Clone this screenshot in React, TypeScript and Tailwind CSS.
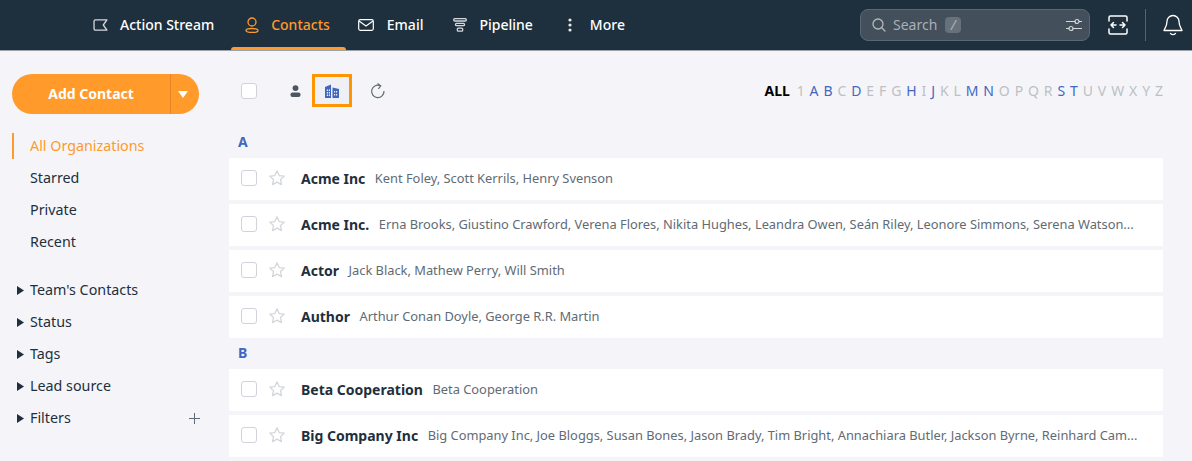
import type { ReactNode } from 'react';

const letters: [string, boolean][] = [
  ['1', false], ['A', true], ['B', true], ['C', false], ['D', true], ['E', false], ['F', false], ['G', false],
  ['H', true], ['I', false], ['J', true], ['K', false], ['L', false], ['M', true], ['N', true], ['O', false],
  ['P', false], ['Q', false], ['R', false], ['S', true], ['T', true], ['U', false], ['V', false], ['W', false],
  ['X', false], ['Y', false], ['Z', false],
];

const groups = [
  {
    letter: 'A',
    rows: [
      ['Acme Inc', 'Kent Foley, Scott Kerrils, Henry Svenson'],
      ['Acme Inc.', 'Erna Brooks, Giustino Crawford, Verena Flores, Nikita Hughes, Leandra Owen, Seán Riley, Leonore Simmons, Serena Watson...'],
      ['Actor', 'Jack Black, Mathew Perry, Will Smith'],
      ['Author', 'Arthur Conan Doyle, George R.R. Martin'],
    ],
  },
  {
    letter: 'B',
    rows: [
      ['Beta Cooperation', 'Beta Cooperation'],
      ['Big Company Inc', 'Big Company Inc, Joe Bloggs, Susan Bones, Jason Brady, Tim Bright, Annachiara Butler, Jackson Byrne, Reinhard Cam...'],
    ],
  },
];

function Checkbox() {
  return <span className="block w-4 h-4 shrink-0 rounded-[3px] border border-[#cfd3dc] bg-white" />;
}

function Star() {
  return (
    <svg viewBox="0 0 24 24" className="w-[18px] h-[18px] shrink-0" fill="none" stroke="#d3d6da" strokeWidth="1.7" strokeLinejoin="round">
      <path d="M12 2.5l2.9 6.2 6.8.8-5 4.6 1.3 6.7L12 17.5l-6 3.3 1.3-6.7-5-4.6 6.8-.8z" />
    </svg>
  );
}

function NavItem({ icon, label, active, className }: { icon: ReactNode; label: string; active?: boolean; className?: string }) {
  return (
    <a className={'relative flex items-center h-[50px] text-sm font-medium ' + (active ? 'text-[#ff9a2b] ' : 'text-white ') + (className ?? '')}>
      {icon}
      {label}
      {active && <span className="absolute left-0 right-0 bottom-0 h-[3px] rounded-t-sm bg-[#ff9a2b]" />}
    </a>
  );
}

function TreeItem({ label, children }: { label: string; children?: ReactNode }) {
  return (
    <div className="flex items-center h-8 pl-[5px] text-[14.3px] text-[#1e2f3d]">
      <svg viewBox="0 0 7 9" className="w-[7px] h-[9px] mr-[6px]"><path d="M0 0l7 4.5L0 9z" fill="#1e2f3d" /></svg>
      {label}
      {children}
    </div>
  );
}

export default function App() {
  return (
    <div className="h-[461px] overflow-hidden bg-[#f5f5f9] font-['Noto_Sans','Open_Sans',sans-serif]">
      <header className="flex items-center h-[51px] bg-[#1e2f3d] border-b border-[#9aa1a8] pl-[93px] pr-[9px]">
        <NavItem
          label="Action Stream"
          className="mr-[17px]"
          icon={
            <svg viewBox="0 0 16 13" className="w-[15px] h-3 mr-[12px]" fill="none" stroke="#d5d8db" strokeWidth="1.4" strokeLinejoin="round">
              <path d="M2.5 1h12.500l-4 5.500 4 5.500H2.500a1.500 1.500 0 01-1.500-1.500v-8A1.500 1.500 0 012.500 1z" />
            </svg>
          }
        />
        <NavItem
          active
          label="Contacts"
          className="pl-[14px] pr-[16px] mr-[12px]"
          icon={
            <svg viewBox="0 0 14 16" className="w-[14px] h-[16px] mr-[12px]" fill="none" stroke="#ff9a2b" strokeWidth="1.3">
              <circle cx="7" cy="5" r="4" />
              <ellipse cx="7" cy="13.500" rx="6" ry="2" />
            </svg>
          }
        />
        <NavItem
          label="Email"
          className="mr-[30px]"
          icon={
            <svg viewBox="0 0 16 12" className="w-4 h-3 mr-[13px]" fill="none" stroke="#ffffff" strokeWidth="1.200">
              <rect x="0.700" y="0.700" width="14.600" height="10.600" rx="1.500" />
              <path d="M1 2l7 5 7-5" />
            </svg>
          }
        />
        <NavItem
          label="Pipeline"
          className="mr-[35px]"
          icon={
            <svg viewBox="0 0 14 14" className="w-[14px] h-[14px] mr-[12px]" fill="none" stroke="#d5d8db" strokeWidth="1.300">
              <rect x="0.700" y="0.700" width="12.600" height="2.300" rx="1" />
              <rect x="2.500" y="5.400" width="9" height="2.300" rx="1" />
              <rect x="4.300" y="10.200" width="5.400" height="3" rx="1" />
            </svg>
          }
        />
        <NavItem
          label="More"
          icon={
            <svg viewBox="0 0 4 14" className="w-1 h-[14px] mr-[18px]" fill="#e6e8ea">
              <circle cx="2" cy="2" r="1.600" />
              <circle cx="2" cy="7" r="1.600" />
              <circle cx="2" cy="12" r="1.600" />
            </svg>
          }
        />

        <div className="ml-auto flex items-center w-[230px] h-8 rounded-lg border border-[#5b6772] bg-[#434f5a] pl-[10px] pr-[7px] text-sm text-[#a9b0b6]">
          <svg viewBox="0 0 16 16" className="w-4 h-4 mr-[6px]" fill="none" stroke="#b3b9be" strokeWidth="1.300">
            <circle cx="7" cy="7" r="5" />
            <path d="M11 11l3 3" strokeLinecap="round" />
          </svg>
          Search
          <span className="flex items-center justify-center w-4 h-4 ml-2 rounded-sm bg-[#66717b] text-sm italic leading-none">/</span>
          <svg viewBox="0 0 16 16" className="w-4 h-4 ml-auto" fill="none" stroke="#d5d8db" strokeWidth="1.200">
            <path d="M0 4.500h9M13 4.500h3M0 11.500h3M7 11.500h9" />
            <circle cx="11" cy="4.500" r="2" />
            <circle cx="5" cy="11.500" r="2" />
          </svg>
        </div>

        <svg viewBox="0 0 20 20" className="w-5 h-5 ml-[18px]" fill="none" stroke="#ffffff" strokeWidth="1.500" strokeLinecap="round" strokeLinejoin="round">
          <path d="M1 6V2.500A1.500 1.500 0 012.500 1h15A1.500 1.500 0 0119 2.500V6M1 14v3.500A1.500 1.500 0 002.500 19h15a1.500 1.500 0 001.500-1.500V14" />
          <path d="M5.500 7.500L3 10l2.500 2.500M3 10h5M14.500 7.500L17 10l-2.500 2.500M12 10h5" />
        </svg>
        <span className="w-px h-8 ml-[17px] bg-[#56636e]" />
        <svg viewBox="0 0 20 22" className="w-5 h-[22px] ml-[17px]" fill="none" stroke="#ffffff" strokeWidth="1.300" strokeLinecap="round" strokeLinejoin="round">
          <path d="M10 1.500a6 6 0 00-6 6c0 4.500-2.500 7-3 9h18c-.5-2-3-4.500-3-9a6 6 0 00-6-6z" />
          <path d="M7.500 19.500c1.500 1.300 3.500 1.300 5 0" />
        </svg>
      </header>

      <div className="flex">
        <aside className="w-[229px] shrink-0 pt-[23px] pl-3 pr-[30px]">
          <div className="flex h-10 rounded-full bg-[#ff9a2b] text-sm font-bold text-white">
            <button className="flex-1 text-center">Add Contact</button>
            <span className="flex items-center justify-center w-[29px] border-l border-[#e6862a]">
              <svg viewBox="0 0 10 7" className="w-[10px] h-[7px] mr-[4px]"><path d="M0 0h10L5 7z" fill="#ffffff" /></svg>
            </span>
          </div>

          <nav className="mt-[19px]">
            <div className="flex items-center h-[26px] mb-[3px] pl-4 border-l-2 border-[#ff9a2b] text-[14.3px] text-[#ff9a2b]">All Organizations</div>
            {['Starred', 'Private', 'Recent'].map((item) => (
              <div key={item} className="flex items-center h-8 pl-[18px] text-[14.3px] text-[#1e2f3d]">{item}</div>
            ))}
            <div className="h-4" />
            <TreeItem label="Team's Contacts" />
            <TreeItem label="Status" />
            <TreeItem label="Tags" />
            <TreeItem label="Lead source" />
            <TreeItem label="Filters">
              <svg viewBox="0 0 12 12" className="w-[11px] h-[11px] ml-auto mr-[-1px]" stroke="#5f6b75" strokeWidth="1.100"><path d="M6 0v12M0 6h12" /></svg>
            </TreeItem>
          </nav>
        </aside>

        <main className="flex-1 min-w-0 pr-[29px]">
          <div className="flex items-center h-[33px] mt-[23px]">
            <span className="ml-3"><Checkbox /></span>
            <svg viewBox="0 0 12 13" className="w-[11px] h-3 ml-[33px]" fill="#4b5660">
              <circle cx="6" cy="3.300" r="3.200" />
              <rect x="0.500" y="8" width="11" height="5" rx="2.200" />
            </svg>
            <span className="flex items-center justify-center w-10 h-[33px] ml-[11px] border-[3px] border-[#ff9500] bg-[#eef0f6]">
              <svg viewBox="0 0 14 14" className="w-[14px] h-[14px]" fill="#3f67bd">
                <path fillRule="evenodd" d="M0 3l6-2.500V14H0zM7.500 3.500L14 5v9H7.500zM1.800 5.500v1.500h1.200V5.500zM3.800 5.500v1.500H5V5.500zM1.800 8v1.500h1.200V8zM3.800 8v1.500H5V8zM1.800 10.500V12h1.200v-1.500zM3.800 10.500V12H5v-1.500zM9 7v1.500h1.200V7zM11 7v1.500h1.200V7zM9 10v1.500h1.200V10zM11 10v1.500h1.200V10z" />
              </svg>
            </span>
            <svg viewBox="0 0 16 16" className="w-4 h-4 ml-[18px]" fill="none" stroke="#5f6b75" strokeWidth="1.200">
              <path d="M10.500 2.800A6.200 6.200 0 1014 8" />
              <path d="M7.500 0.500l3.200 2.300-2.300 3" />
            </svg>

            <div className="ml-auto flex items-center text-sm text-[#bcc0c5]">
              <span className="font-bold text-black mr-[2px]">ALL</span>
              {letters.map(([l, on]) => (
                <span key={l} className={'ml-[4.9px] ' + (on ? 'text-[#4168be]' : '')}>{l}</span>
              ))}
            </div>
          </div>

          <div className="mt-[27px]">
            {groups.map((g) => (
              <section key={g.letter}>
                <div className={'flex items-center h-[16px] pl-[9px] mb-[8px] text-sm font-bold text-[#4168be] ' + (g.letter === 'B' ? 'mt-[7px]' : '')}>{g.letter}</div>
                {g.rows.map(([name, people]) => (
                  <div key={name} className="flex items-center h-[42px] mb-1 pl-3 bg-white">
                    <span className="mb-[2px]"><Checkbox /></span>
                    <span className="ml-[11px] mr-[15px] mb-[2px]"><Star /></span>
                    <span className="shrink-0 text-sm font-bold text-[#1e2f3d]">{name}</span>
                    <span className="ml-[9.5px] whitespace-nowrap text-[12.85px] text-[#5f6b75]">{people}</span>
                  </div>
                ))}
              </section>
            ))}
          </div>
        </main>
      </div>
    </div>
  );
}
